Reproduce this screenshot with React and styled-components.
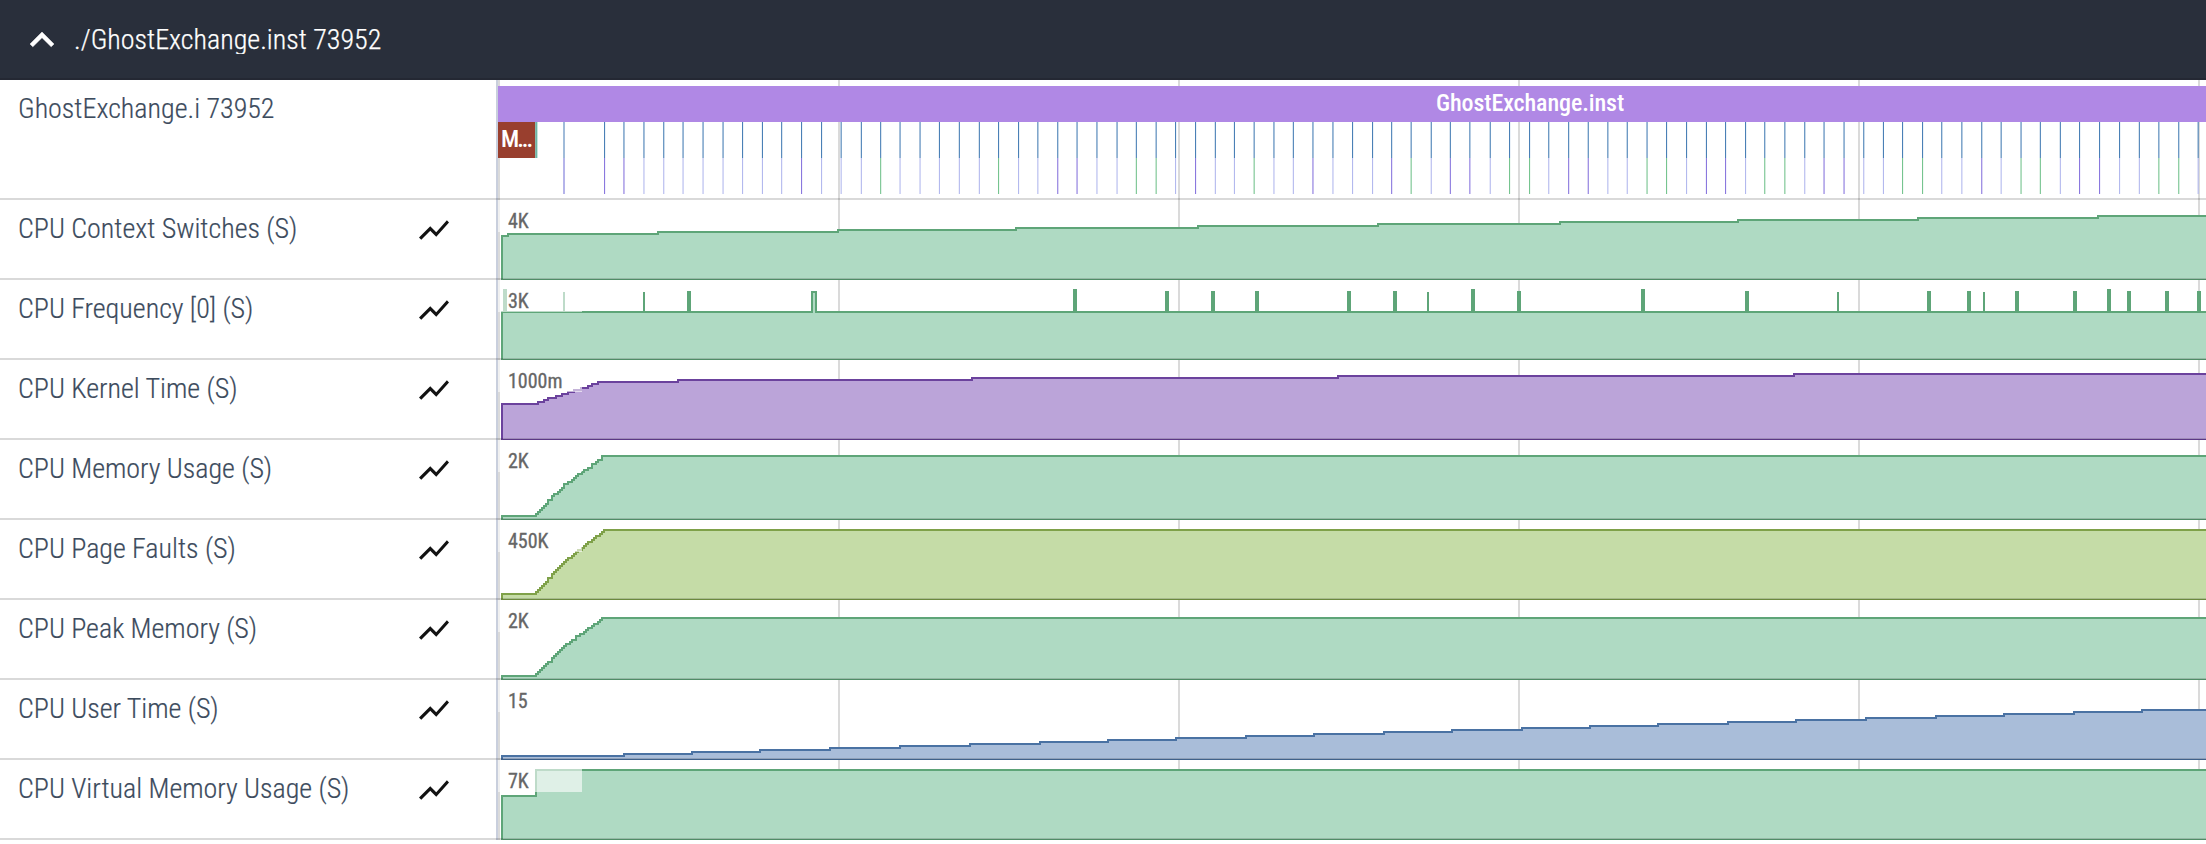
import React from "react";
import styled, { createGlobalStyle } from "styled-components";

const GlobalStyle = createGlobalStyle`
  body {
    margin: 0;
    background: #ffffff;
    font-family: "Roboto Condensed", Roboto, "Liberation Sans", sans-serif;
  }
`;

const Page = styled.main`
  display: flex;
  flex-direction: column;
  width: 2206px;
  height: 844px;
  overflow: hidden;
  background: #ffffff;
`;

const GroupHeader = styled.header`
  display: flex;
  align-items: center;
  box-sizing: border-box;
  height: 80px;
  padding-left: 18px;
  gap: 8px;
  background: #292f3b;
  border-bottom: 2px solid #242833;
  color: #ffffff;
`;

const ChevronIcon = styled.svg`
  width: 48px;
  height: 48px;
  margin-top: 2px;
  fill: currentColor;
  stroke: currentColor;
  stroke-width: 0.25;
`;

const GroupTitle = styled.h1`
  margin: 2px 0 0;
  font-size: 28px;
  font-weight: 300;
  line-height: 28px;
  -webkit-text-stroke: 0.25px currentColor;
  overflow: hidden;
  white-space: nowrap;
`;

const TrackRow = styled.section`
  display: grid;
  grid-template-columns: 498px 1708px;
  position: relative;
  height: ${(p) => p.$height}px;

  &::after {
    content: "";
    position: absolute;
    inset: auto 0 0 0;
    height: 2px;
    background: rgba(0, 0, 0, 0.15);
  }
`;

const TrackShell = styled.div`
  display: flex;
  justify-content: space-between;
  align-items: flex-start;
  box-sizing: border-box;
  padding: 12px 44px 0 18px;
  border-right: 2px solid #c9cfdd;
`;

const TrackName = styled.h2`
  margin: 1px 0 0;
  font-size: 28px;
  font-weight: 300;
  line-height: 32px;
  color: #3c4b5d;
  -webkit-text-stroke: 0.2px currentColor;
  white-space: nowrap;
`;

const ChartIcon = styled.svg`
  width: 36px;
  height: 36px;
  fill: #121212;
`;

const Canvas = styled.svg`
  display: block;
  width: 1708px;
  height: ${(p) => p.$height}px;
`;

const SliceText = styled.text`
  font-size: 24px;
  font-weight: 500;
  letter-spacing: -0.1px;
  fill: #ffffff;
`;

const ScaleText = styled.text`
  font-size: 20px;
  font-weight: 400;
  fill: #666666;
  stroke: #666666;
  stroke-width: 0.3px;
`;

const LEFT = 498;
const RIGHT = 2206;
const GRID = [498, 838, 1178, 1518, 1858, 2198];

const palette = {
  green: { fill: "#afdac3", stroke: "#5ea578" },
  purple: { fill: "#bba4d9", stroke: "#6b429d" },
  lime: { fill: "#c5dca7", stroke: "#7fa149" },
  blue: { fill: "#a9bdd9", stroke: "#4a72a3" },
};

/* Start level, then flat x, y pairs where the counter changes. */
const counters = [
  {
    name: "CPU Context Switches (S)", scale: "4K", color: "green", start: 36,
    steps: [508, 34, 658, 32, 838, 30, 1016, 28, 1198, 26, 1378, 24, 1560, 22, 1738, 20, 1918, 18, 2098, 16],
  },
  {
    name: "CPU Frequency [0] (S)", scale: "3K", color: "green", start: 32,
    steps: [
      504, 10, 506, 32, 688, 12, 690, 32, 812, 12, 816, 32, 1074, 10, 1076, 32, 1166, 12, 1168, 32,
      1212, 12, 1214, 32, 1256, 12, 1258, 32, 1348, 12, 1350, 32, 1394, 12, 1396, 32, 1472, 10, 1474, 32,
      1518, 12, 1520, 32, 1642, 10, 1644, 32, 1746, 12, 1748, 32, 1928, 12, 1930, 32, 1968, 12, 1970, 32,
      2016, 12, 2018, 32, 2074, 12, 2076, 32, 2108, 10, 2110, 32, 2128, 12, 2130, 32, 2166, 12, 2168, 32,
      2198, 12, 2200, 32,
    ],
    spikes: [564, 644, 1428, 1838, 1984],
  },
  {
    name: "CPU Kernel Time (S)", scale: "1000m", color: "purple", start: 44,
    steps: [
      538, 42, 544, 40, 548, 38, 556, 36, 562, 34, 568, 32, 574, 30, 581, 28, 588, 26, 592, 24, 598, 22,
      678, 20, 972, 18, 1338, 16, 1794, 14,
    ],
  },
  {
    name: "CPU Memory Usage (S)", scale: "2K", color: "green", start: 76,
    steps: [
      536, 74, 538, 72, 540, 70, 542, 68, 544, 66, 546, 64, 548, 60, 552, 56, 554, 54, 558, 52, 560, 50,
      562, 48, 564, 44, 568, 42, 572, 40, 574, 38, 576, 36, 578, 34, 582, 32, 584, 30, 588, 28, 592, 24,
      596, 22, 598, 20, 602, 16,
    ],
  },
  {
    name: "CPU Page Faults (S)", scale: "450K", color: "lime", start: 74,
    steps: [
      536, 72, 538, 70, 540, 68, 542, 66, 544, 64, 546, 62, 548, 58, 552, 54, 554, 52, 556, 50, 558, 48,
      560, 46, 562, 44, 564, 42, 566, 40, 568, 38, 572, 36, 574, 34, 576, 32, 578, 30, 582, 28, 584, 26,
      586, 24, 588, 22, 592, 20, 594, 18, 596, 16, 600, 14, 602, 12, 604, 10,
    ],
  },
  {
    name: "CPU Peak Memory (S)", scale: "2K", color: "green", start: 76,
    steps: [
      536, 74, 538, 72, 540, 70, 542, 68, 544, 66, 546, 64, 548, 62, 552, 58, 554, 56, 556, 54, 558, 52,
      560, 50, 562, 48, 564, 46, 566, 44, 570, 42, 572, 40, 576, 36, 580, 34, 584, 32, 586, 30, 588, 28,
      592, 26, 594, 24, 598, 22, 600, 20, 602, 18,
    ],
  },
  {
    name: "CPU User Time (S)", scale: "15", color: "blue", start: 76,
    steps: [
      624, 74, 692, 72, 760, 70, 830, 68, 900, 66, 970, 64, 1040, 62, 1108, 60, 1176, 58, 1246, 56,
      1314, 54, 1384, 52, 1452, 50, 1522, 48, 1590, 46, 1658, 44, 1728, 42, 1796, 40, 1866, 38, 1936, 36,
      2004, 34, 2074, 32, 2142, 30,
    ],
  },
  {
    name: "CPU Virtual Memory Usage (S)", scale: "7K", color: "green", start: 36,
    steps: [536, 10],
  },
];

/* Left edges of the nested calls under the main slice. */
const calls = [
  604, 623.4, 643.4, 663.2, 682.5, 702.5, 722.5, 742, 761.9, 781.1, 801, 821, 840.6, 860.8, 880.1, 899.5,
  919.5, 938.9, 958.8, 978.8, 998, 1018, 1037.3, 1057.2, 1076.5, 1096.4, 1116.5, 1135.8, 1155.6, 1175,
  1195, 1214.8, 1233.9, 1253.6, 1273.4, 1292.8, 1312.4, 1332.4, 1352, 1372, 1391.1, 1410.6, 1430.7,
  1449.8, 1469.3, 1489.7, 1509, 1529, 1548.2, 1568.1, 1587.7, 1607.3, 1626.7, 1646.5, 1666, 1686,
  1705.9, 1725, 1745, 1764.2, 1784.3, 1804.2, 1823.5, 1843.5, 1863.2, 1882.9, 1902, 1922, 1941.2,
  1961.3, 1981.2, 2000.6, 2020.5, 2039.8, 2059.8, 2079, 2099, 2119, 2138.8, 2158.3, 2178.2, 2197.6,
];
/* Indexes of the innermost calls that are purple or green; the others are lavender. */
const purpleCalls = new Set([0, 1, 10, 23, 24, 30, 36, 40, 43, 44, 49, 50, 56, 57, 62, 63, 70, 75, 76]);
const greenCalls = new Set([14, 20, 27, 28, 33, 41, 46, 47, 53, 54, 59, 60, 66, 67, 72, 73, 79, 80]);

function innerCallColor(i) {
  if (purpleCalls.has(i)) return "#8a78de";
  if (greenCalls.has(i)) return "#76c48f";
  return "#b3b9ee";
}

function GridLines({ height }) {
  return GRID.map((x) => <rect key={x} x={x} y="0" width="2" height={height} fill="#dadada" />);
}

function SliceTrack() {
  return (
    <TrackRow $height={120}>
      <TrackShell>
        <TrackName>GhostExchange.i 73952</TrackName>
      </TrackShell>
      <Canvas $height={120} viewBox={`${LEFT} 0 ${RIGHT - LEFT} 120`}>
        <GridLines height={120} />
        <rect x={LEFT} y="6" width={RIGHT - LEFT} height="36" fill="#b088e5" />
        <SliceText x="1530" y="31" textAnchor="middle">GhostExchange.inst</SliceText>
        <rect x={LEFT} y="42" width="37.2" height="36" fill="#993f2e" />
        <rect x="535.2" y="42" width="1.8" height="36" fill="#6fb3a4" />
        <rect x="537" y="42" width="1" height="36" fill="#c3e6dc" />
        <SliceText x="501" y="67" textLength="32" lengthAdjust="spacing">M...</SliceText>
        <rect x="563" y="42" width="2" height="36" fill="#a0bbd9" />
        <rect x="563" y="78" width="2" height="36" fill="#b5b4ea" />
        {calls.map((x, i) => (
          <g key={x}>
            <rect x={x} y="42" width="1.1" height="36" fill="#4a80b6" />
            <rect x={x} y="78" width="1.1" height="36" fill={innerCallColor(i)} />
          </g>
        ))}
      </Canvas>
    </TrackRow>
  );
}

function stepPath(start, steps) {
  let d = `M502 80V${start}`;
  for (let i = 0; i < steps.length; i += 2) d += `H${steps[i]}V${steps[i + 1]}`;
  return `${d}H2210V80Z`;
}

function CounterTrack({ name, scale, color, start, steps, spikes = [] }) {
  const { fill, stroke } = palette[color];
  return (
    <TrackRow $height={80}>
      <TrackShell>
        <TrackName>{name}</TrackName>
        <ChartIcon viewBox="0 0 24 24">
          <path d="M3.5 18.49l6-6.01 4 4L22 6.92l-1.41-1.41-7.09 7.97-4-4L2 16.99z" />
        </ChartIcon>
      </TrackShell>
      <Canvas $height={80} viewBox={`${LEFT} 0 ${RIGHT - LEFT} 80`}>
        <GridLines height={80} />
        <path d={stepPath(start, steps)} fill={fill} stroke={stroke} strokeWidth="2" />
        {spikes.map((x) => (
          <rect key={x} x={x - 1} y="12" width="2" height="20" fill={stroke} />
        ))}
        <rect x={LEFT} y="0" width="84" height="32" fill="#ffffff" opacity="0.6" />
        <ScaleText x="508" y="28">{scale}</ScaleText>
      </Canvas>
    </TrackRow>
  );
}

export default function App() {
  return (
    <>
      <GlobalStyle />
      <Page>
        <GroupHeader>
          <ChevronIcon viewBox="0 0 24 24">
            <path d="M12 8l-6 6 1.41 1.41L12 10.83l4.59 4.58L18 14z" />
          </ChevronIcon>
          <GroupTitle>./GhostExchange.inst 73952</GroupTitle>
        </GroupHeader>
        <SliceTrack />
        {counters.map((counter) => (
          <CounterTrack key={counter.name} {...counter} />
        ))}
      </Page>
    </>
  );
}
